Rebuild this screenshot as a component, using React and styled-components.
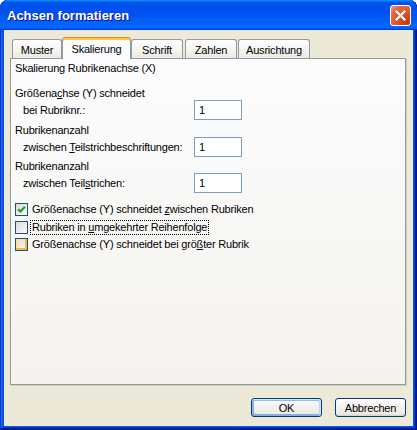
import React from "react";
import styled, { createGlobalStyle, css } from "styled-components";

const Global = createGlobalStyle`
  html, body { margin: 0; padding: 0; background: #ffffff; }
  body { font-family: "Liberation Sans", Arial, sans-serif; }
  * { box-sizing: border-box; }
`;

const Window = styled.div`
  width: 417px;
  height: 430px;
  display: flex;
  flex-direction: column;
  border-radius: 8px 8px 0 0;
  overflow: hidden;
  background: #0855dd;
  box-shadow: inset -1px -1px #00138c, inset 1px 1px #0831d9,
    inset -2px -2px #001ea0, inset 2px 2px #166aee,
    inset -3px -3px #003bda, inset 3px 3px #0855dd;
  font-family: "Liberation Sans", Arial, sans-serif;
  font-size: 11px;
  letter-spacing: -0.2px;
  color: #000;
`;

const TitleBar = styled.div`
  height: 30px;
  flex: none;
  display: flex;
  align-items: center;
  justify-content: space-between;
  padding: 0 6px 0 7px;
  border-radius: 8px 8px 0 0;
  background: linear-gradient(
    180deg,
    #0997ff,
    #0053ee 8%,
    #0050ee 40%,
    #0066ff 88%,
    #0066ff 93%,
    #005bff 95%,
    #003dd7 96%,
    #003dd7
  );
`;

const TitleText = styled.div`
  font-family: "Liberation Sans", Arial, sans-serif;
  font-weight: bold;
  font-size: 13px;
  letter-spacing: 0;
  color: #fff;
  text-shadow: 1px 1px #0f1089;
  padding-top: 1px;
`;

const CloseButton = styled.div`
  width: 21px;
  height: 21px;
  border: 1px solid #fff;
  border-radius: 3px;
  display: flex;
  align-items: center;
  justify-content: center;
  background: radial-gradient(
    circle at 85% 85%,
    #c53a0f 0%,
    #e0522a 45%,
    #e46845 75%,
    #f2a088 100%
  );
`;

const Body = styled.div`
  flex: 1;
  margin: 0 4px 4px 4px;
  background: #ece9d8;
  display: flex;
  flex-direction: column;
  padding: 7px 7px 9px 6px;
`;

const TabStrip = styled.div`
  height: 22px;
  margin-bottom: -1px;
  display: flex;
  align-items: flex-start;
  padding-left: 2px;
  position: relative;
  z-index: 1;
`;

const Tab = styled.div`
  width: ${(p) => p.w}px;
  margin-right: ${(p) => p.gap}px;
  display: flex;
  justify-content: center;
  align-items: center;
  border: 1px solid #919b9c;
  border-bottom: none;
  border-radius: 3px 3px 0 0;
  ${(p) =>
    p.active
      ? css`
          height: 22px;
          margin-left: -1px;
          margin-right: ${p.gap - 1}px;
          width: ${p.w + 2}px;
          background: #fcfcfe;
          border-top: 1px solid #e68b2c;
          box-shadow: inset 0 2px #ffc73c;
          padding-top: 1px;
        `
      : css`
          height: 19px;
          margin-top: 2px;
          background: linear-gradient(180deg, #fefefe 0%, #f4f3ef 60%, #eae8e1 100%);
          padding-top: 2px;
        `}
`;

const Panel = styled.div`
  flex: 1;
  border: 1px solid #919b9c;
  background: linear-gradient(180deg, #fcfcfe 0%, #f4f3ee 100%);
  box-shadow: 1px 1px 0 #d0cebf;
  padding: 3px 4px 0 4px;
  display: flex;
  flex-direction: column;
`;

const Heading = styled.div`
  line-height: 13px;
  margin-bottom: 12px;
`;

const Group = styled.div`
  display: flex;
  flex-direction: column;
  margin-bottom: ${(p) => p.mb}px;
`;

const GroupLabel = styled.div`
  line-height: 13px;
`;

const FieldRow = styled.div`
  display: grid;
  grid-template-columns: 179px 48px;
  align-items: center;
  height: 20px;
`;

const SubLabel = styled.div`
  padding-left: 8px;
  line-height: 13px;
`;

const NumberBox = styled.input`
  width: 48px;
  height: 20px;
  border: 1px solid #7f9db9;
  background: #fff;
  padding: 0 4px;
  font-family: "Liberation Sans", Arial, sans-serif;
  font-size: 11px;
  color: #000;
  outline: none;
`;

const CheckList = styled.div`
  display: flex;
  flex-direction: column;
  margin-top: 8px;
`;

const CheckRow = styled.div`
  height: 17.5px;
  display: flex;
  align-items: center;
`;

const Box = styled.div`
  width: 13px;
  height: 13px;
  border: 1px solid #1c5180;
  display: flex;
  align-items: center;
  justify-content: center;
  background: linear-gradient(135deg, #dcdcd7 0%, #fbfbf9 100%);
  ${(p) =>
    p.hover &&
    css`
      box-shadow: inset -2px -2px #f8b636, inset 2px 2px #fedf9c;
    `}
`;

const CheckLabel = styled.span`
  margin-left: 2px;
  padding: 0 1px;
  line-height: 13px;
  border: 1px ${(p) => (p.focus ? "dotted #000" : "solid transparent")};
`;

const Footer = styled.div`
  margin-top: 13px;
  display: flex;
  justify-content: flex-end;
  gap: 13px;
`;

const Button = styled.div`
  width: 71px;
  height: 19px;
  border: 1px solid #003c74;
  border-radius: 3px;
  display: flex;
  align-items: center;
  justify-content: center;
  background: linear-gradient(180deg, #ffffff 0%, #f3f2ee 40%, #ecebe6 86%, #d6d0c5 100%);
  ${(p) =>
    p.primary &&
    css`
      box-shadow: inset -1px 1px #cee7ff, inset 1px 2px #98b8ea,
        inset -2px 2px #bcd4f6, inset 1px -1px #89ade4,
        inset 2px -2px #89ade4;
    `}
`;

const tabs = [
  { label: "Muster", w: 50, gap: 1 },
  { label: "Skalierung", w: 67, gap: 1, active: true },
  { label: "Schrift", w: 52, gap: 2 },
  { label: "Zahlen", w: 52, gap: 1 },
  { label: "Ausrichtung", w: 72, gap: 0 },
];

const CheckMark = () => (
  <svg width="9" height="9" viewBox="0 0 9 9">
    <path d="M1 4.2 L3.4 6.6 L8 1.8" fill="none" stroke="#21a121" strokeWidth="2.1" />
  </svg>
);

const CloseIcon = () => (
  <svg width="11" height="11" viewBox="0 0 11 11">
    <path d="M1.5 1.5 L9.5 9.5 M9.5 1.5 L1.5 9.5" stroke="#fff" strokeWidth="2.2" strokeLinecap="square" />
  </svg>
);

export default function App() {
  return (
    <>
      <Global />
      <Window>
        <TitleBar>
          <TitleText>Achsen formatieren</TitleText>
          <CloseButton>
            <CloseIcon />
          </CloseButton>
        </TitleBar>
        <Body>
          <TabStrip>
            {tabs.map((t) => (
              <Tab key={t.label} w={t.w} gap={t.gap} active={t.active}>
                {t.label}
              </Tab>
            ))}
          </TabStrip>
          <Panel>
            <Heading>Skalierung Rubrikenachse (X)</Heading>
            <Group mb={4}>
              <GroupLabel>
                Größena<u>c</u>hse (Y) schneidet
              </GroupLabel>
              <FieldRow>
                <SubLabel>bei Rubriknr.:</SubLabel>
                <NumberBox readOnly value="1" />
              </FieldRow>
            </Group>
            <Group mb={3}>
              <GroupLabel>Rubrikenanzahl</GroupLabel>
              <FieldRow>
                <SubLabel>
                  zwischen <u>T</u>eilstrichbeschriftungen:
                </SubLabel>
                <NumberBox readOnly value="1" />
              </FieldRow>
            </Group>
            <Group mb={0}>
              <GroupLabel>Rubrikenanzahl</GroupLabel>
              <FieldRow>
                <SubLabel>
                  zwischen Teil<u>s</u>trichen:
                </SubLabel>
                <NumberBox readOnly value="1" />
              </FieldRow>
            </Group>
            <CheckList>
              <CheckRow>
                <Box>
                  <CheckMark />
                </Box>
                <CheckLabel>
                  Größenachse (Y) schneidet <u>z</u>wischen Rubriken
                </CheckLabel>
              </CheckRow>
              <CheckRow>
                <Box />
                <CheckLabel focus>
                  Rubriken in <u>u</u>mgekehrter Reihenfolge
                </CheckLabel>
              </CheckRow>
              <CheckRow>
                <Box hover />
                <CheckLabel>
                  Größenachse (Y) schneidet bei grö<u>ß</u>ter Rubrik
                </CheckLabel>
              </CheckRow>
            </CheckList>
          </Panel>
          <Footer>
            <Button primary>OK</Button>
            <Button>Abbrechen</Button>
          </Footer>
        </Body>
      </Window>
    </>
  );
}
